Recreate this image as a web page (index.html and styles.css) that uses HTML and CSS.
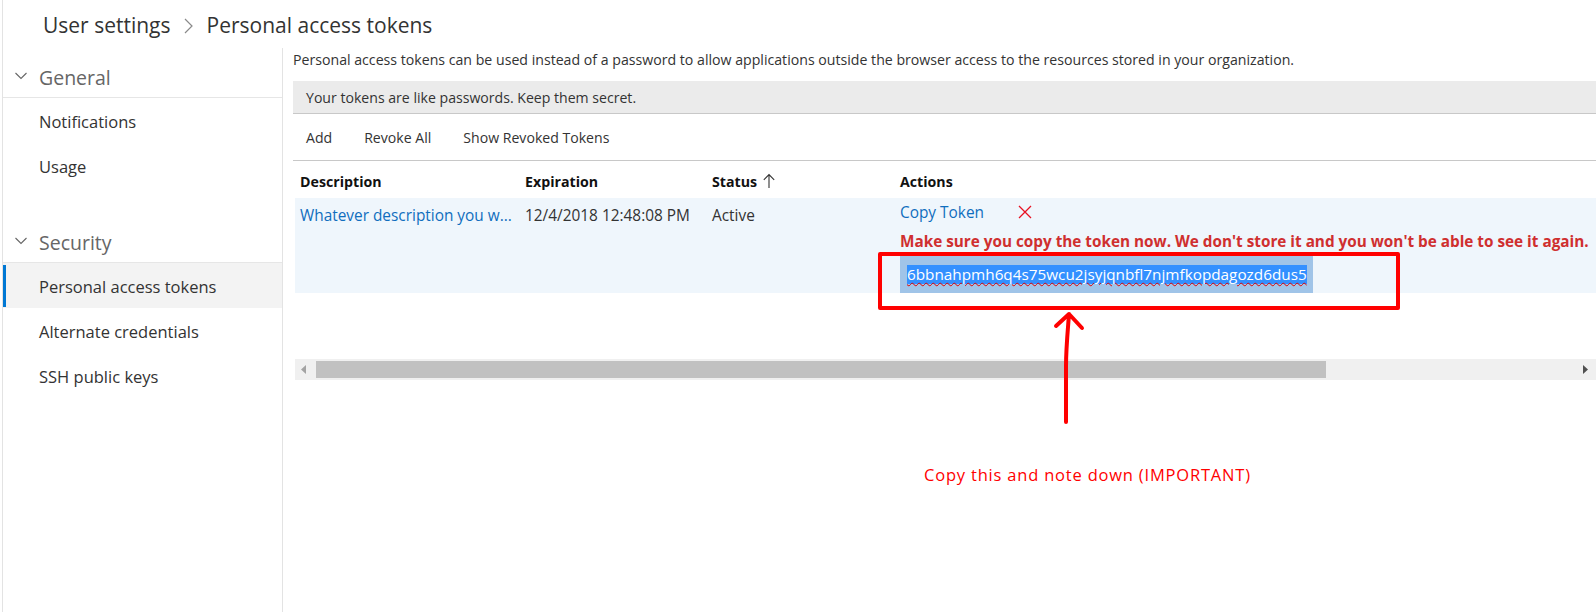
FILE: index.html
```html
<!DOCTYPE html>
<html lang="en">
<head>
<meta charset="utf-8">
<title>Personal access tokens</title>
<link rel="stylesheet" href="styles.css">
</head>
<body>
<div class="page">
  <header class="top">
    <span class="crumb">User settings</span>
    <svg class="crumb-sep" width="9" height="16" viewBox="0 0 9 16"><path d="M1 1 L8 8 L1 15" fill="none" stroke="#8a8a8a" stroke-width="1.2"/></svg>
    <span class="crumb">Personal access tokens</span>
  </header>
  <div class="layout">
    <nav class="side">
      <div class="group">
        <div class="group-head">
          <svg class="chev" width="12" height="8" viewBox="0 0 12 8"><path d="M0.5 1 L6 6.5 L11.5 1" fill="none" stroke="#666" stroke-width="1.1"/></svg>
          <span>General</span>
        </div>
        <div class="item">Notifications</div>
        <div class="item">Usage</div>
      </div>
      <div class="group group-sec">
        <div class="group-head">
          <svg class="chev" width="12" height="8" viewBox="0 0 12 8"><path d="M0.5 1 L6 6.5 L11.5 1" fill="none" stroke="#666" stroke-width="1.1"/></svg>
          <span>Security</span>
        </div>
        <div class="item selected">Personal access tokens</div>
        <div class="item">Alternate credentials</div>
        <div class="item">SSH public keys</div>
      </div>
    </nav>
    <main class="main">
      <p class="intro">Personal access tokens can be used instead of a password to allow applications outside the browser access to the resources stored in your organization.</p>
      <div class="banner">Your tokens are like passwords. Keep them secret.</div>
      <div class="toolbar">
        <span class="tb-btn">Add</span>
        <span class="tb-btn">Revoke All</span>
        <span class="tb-btn">Show Revoked Tokens</span>
      </div>
      <div class="table">
        <div class="grid thead">
          <div class="cell">Description</div>
          <div class="cell">Expiration</div>
          <div class="cell">Status <svg class="sort" width="12" height="16" viewBox="0 0 12 16"><path d="M6 15 V1.5 M0.8 6.8 L6 1.5 L11.2 6.8" fill="none" stroke="#333" stroke-width="1.1"/></svg></div>
          <div class="cell">Actions</div>
        </div>
        <div class="grid trow">
          <div class="cell link">Whatever description you w...</div>
          <div class="cell">12/4/2018 12:48:08 PM</div>
          <div class="cell">Active</div>
          <div class="cell actions">
            <div class="act-line">
              <span class="link">Copy Token</span>
              <svg class="close" width="14" height="14" viewBox="0 0 14 14"><path d="M1 1 L13 13 M13 1 L1 13" fill="none" stroke="#e81123" stroke-width="1.3"/></svg>
            </div>
            <div class="warn">Make sure you copy the token now. We don't store it and you won't be able to see it again.</div>
            <div class="token-box"><span class="token-sel">6bbnahpmh6q4s75wcu2jsyjqnbfl7njmfkopdagozd6dus5</span></div>
          </div>
        </div>
      </div>
      <div class="hscroll">
        <svg class="sc-arrow" width="6" height="9" viewBox="0 0 6 9"><path d="M5 0 L0 4.5 L5 9 Z" fill="#a3a3a3"/></svg>
        <div class="sc-track"><div class="sc-thumb"></div></div>
        <svg class="sc-arrow" width="6" height="9" viewBox="0 0 6 9"><path d="M0 0 L5 4.5 L0 9 Z" fill="#505050"/></svg>
      </div>
    </main>
  </div>
  <div class="annot-box"></div>
  <svg class="annot-arrow" width="40" height="120" viewBox="0 0 40 120"><path d="M7 18 L20 6 L33 20 M20 6 C19 20 17 40 17 58 L17 114" fill="none" stroke="#ff0000" stroke-width="4" stroke-linecap="round" stroke-linejoin="round"/></svg>
  <div class="annot-text">Copy this and note down (IMPORTANT)</div>
</div>
</body>
</html>
```
FILE: styles.css
```css
* { box-sizing: border-box; }
html, body { margin: 0; padding: 0; background: #fff; }
body {
  font-family: "Open Sans", "Noto Sans", sans-serif;
  color: #333;
  width: 1596px;
  height: 612px;
  overflow: hidden;
}
.page {
  position: relative;
  height: 612px;
  margin-left: 2px;
  border-left: 1px solid #e3e3e3;
}
.top {
  height: 48px;
  display: flex;
  align-items: center;
  padding-left: 40px;
  padding-top: 1px;
}
.crumb {
  font-size: 21px;
  color: #333;
}
.crumb-sep { margin: 2px 14px 0 13px; }
.layout {
  display: flex;
  height: 564px;
}
.side {
  width: 280px;
  flex: none;
  border-right: 1px solid #e3e3e3;
}
.group-head {
  height: 50px;
  border-bottom: 1px solid #e6e6e6;
  display: flex;
  align-items: center;
  padding-top: 9px;
  padding-left: 12px;
  font-size: 19.5px;
  color: #666;
}
.chev { margin-right: 12px; margin-top: -3px; }
.group-sec { margin-top: 25px; }
.item {
  height: 45px;
  display: flex;
  align-items: center;
  padding-left: 36px;
  padding-top: 1px;
  font-size: 16.5px;
  color: #333;
  position: relative;
}
.item.selected { background: #f3f3f3; }
.item.selected::before {
  content: "";
  position: absolute;
  left: 0;
  top: 2px;
  bottom: 1px;
  width: 3px;
  background: #0078d4;
}
.main {
  flex: 1;
  min-width: 0;
  padding-left: 10px;
}
.intro {
  margin: 2px 0 0 0;
  line-height: 20px;
  font-size: 14.15px;
  color: #333;
  white-space: nowrap;
}
.banner {
  margin-top: 11px;
  height: 33px;
  background: #ebebeb;
  border-bottom: 1px solid #c8c8c8;
  display: flex;
  align-items: center;
  padding-left: 13px;
  font-size: 14.1px;
  color: #333;
}
.toolbar {
  height: 47px;
  border-bottom: 1px solid #c8c8c8;
  display: flex;
  align-items: center;
  padding-left: 13px;
  font-size: 14.1px;
  color: #333;
}
.tb-btn { margin-right: 32px; }
.table { margin-left: 2px; }
.grid {
  display: grid;
  grid-template-columns: 225px 187px 188px 1fr;
}
.thead {
  height: 37px;
  align-items: center;
  padding-top: 3px;
  font-weight: 700;
  font-size: 14.2px;
  color: #111;
}
.cell {
  padding-left: 5px;
  white-space: nowrap;
  display: flex;
  align-items: center;
}
.sort { margin-left: 6px; margin-top: -1px; }
.trow {
  background: #eff6fc;
  height: 95px;
  align-items: start;
  font-size: 15.4px;
  color: #333;
}
.trow > .cell { padding-top: 8px; line-height: 20px; }
.trow > .cell.actions {
  padding-top: 5px;
  display: block;
}
.link { color: #106ebe; }
.act-line { display: flex; align-items: center; height: 20px; }
.close { margin-left: 34px; margin-top: -2px; }
.warn {
  margin-top: 8px;
  line-height: 20px;
  font-size: 15.3px;
  font-weight: 700;
  color: #cf2f2f;
}
.token-box {
  margin-top: 5px;
  width: 413px;
  height: 37px;
  background: #a0c4e8;
  display: flex;
  align-items: center;
  padding-left: 7px;
}
.token-sel {
  background: #3390ff;
  color: #fff;
  font-size: 15.3px;
  line-height: 19px;
  text-decoration: underline wavy #e00000;
  text-decoration-thickness: 1px;
  text-underline-offset: 2px;
}
.hscroll {
  margin-top: 66px;
  margin-left: 2px;
  height: 21px;
  background: #f0f0f0;
  display: flex;
  align-items: center;
}
.sc-arrow { flex: none; margin: 0 9px 0 6px; }
.hscroll .sc-arrow:last-child { margin: 0 7px 0 auto; }
.sc-track { flex: 1; height: 17px; display: flex; }
.sc-thumb { width: 1010px; height: 17px; background: #c1c1c1; }
.annot-box {
  position: absolute;
  left: 875px;
  top: 252px;
  width: 522px;
  height: 58px;
  border: 4px solid #ff0000;
  border-radius: 2px;
}
.annot-arrow {
  position: absolute;
  left: 1046px;
  top: 308px;
}
.annot-text {
  position: absolute;
  left: 921px;
  top: 463px;
  font-size: 16.5px;
  letter-spacing: 0.8px;
  color: #ff0000;
  white-space: nowrap;
}
```
